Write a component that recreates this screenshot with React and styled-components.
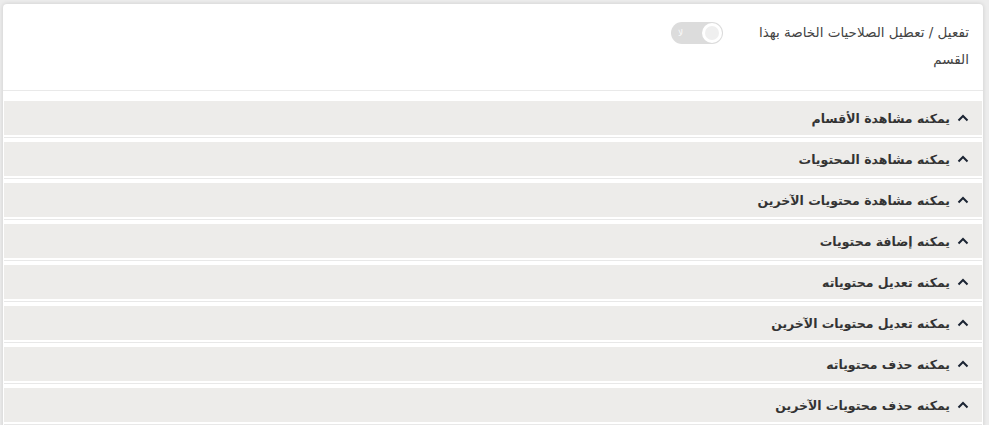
import React from "react";
import styled, { createGlobalStyle } from "styled-components";

const Global = createGlobalStyle`
  html, body { margin: 0; padding: 0; }
  body {
    background: #ececec;
    font-family: "DejaVu Sans", "Noto Sans", sans-serif;
    overflow: hidden;
  }
`;

const Page = styled.div`
  padding: 4px 6px 0 3px;
`;

const Card = styled.section`
  direction: rtl;
  background: #fff;
  border-radius: 4px;
  box-shadow: 0 0 4px rgba(0, 0, 0, 0.14);
  padding-bottom: 20px;
`;

const Header = styled.div`
  display: flex;
  align-items: flex-start;
  gap: 28px;
  padding: 15px 14px 17px;
  border-bottom: 1px solid #e9e9e9;
`;

const Title = styled.div`
  width: 218px;
  font-size: 13.5px;
  line-height: 27px;
  color: #444;
`;

const Toggle = styled.div`
  position: relative;
  margin-top: 3px;
  width: 52px;
  height: 22px;
  border-radius: 11px;
  background: #dcdcdc;
  display: flex;
  align-items: center;
  justify-content: flex-end;
  padding: 0 7px;
  box-sizing: border-box;
`;

const ToggleLabel = styled.span`
  font-size: 9px;
  color: #fafafa;
  line-height: 1;
`;

const Knob = styled.span`
  position: absolute;
  right: 1px;
  top: 1px;
  width: 20px;
  height: 20px;
  border-radius: 50%;
  background: #fff;
  &::after {
    content: "";
    position: absolute;
    inset: 3px;
    border-radius: 50%;
    background: #efefef;
  }
`;

const List = styled.div`
  padding: 10px 1px 0;
`;

const Item = styled.div`
  border-bottom: 1px solid #e8e8e8;
  padding-bottom: 2px;
  margin-bottom: 4px;
`;

const ItemHead = styled.div`
  display: flex;
  align-items: center;
  gap: 7px;
  height: 34px;
  background: #edecea;
  padding: 0 13px;
  font-size: 12.5px;
  font-weight: bold;
  color: #333;
`;

const Chevron = () => (
  <svg width="12" height="8" viewBox="0 0 12 8">
    <polyline
      points="1.5,6.5 6,2 10.5,6.5"
      fill="none"
      stroke="#1b2433"
      strokeWidth="2"
    />
  </svg>
);

const items = [
  "يمكنه مشاهدة الأقسام",
  "يمكنه مشاهدة المحتويات",
  "يمكنه مشاهدة محتويات الآخرين",
  "يمكنه إضافة محتويات",
  "يمكنه تعديل محتوياته",
  "يمكنه تعديل محتويات الآخرين",
  "يمكنه حذف محتوياته",
  "يمكنه حذف محتويات الآخرين",
];

export default function App() {
  return (
    <>
      <Global />
      <Page>
        <Card>
          <Header>
            <Title>تفعيل / تعطيل الصلاحيات الخاصة بهذا القسم</Title>
            <Toggle>
              <ToggleLabel>لا</ToggleLabel>
              <Knob />
            </Toggle>
          </Header>
          <List>
            {items.map((t) => (
              <Item key={t}>
                <ItemHead>
                  <Chevron />
                  <span>{t}</span>
                </ItemHead>
              </Item>
            ))}
          </List>
        </Card>
      </Page>
    </>
  );
}
